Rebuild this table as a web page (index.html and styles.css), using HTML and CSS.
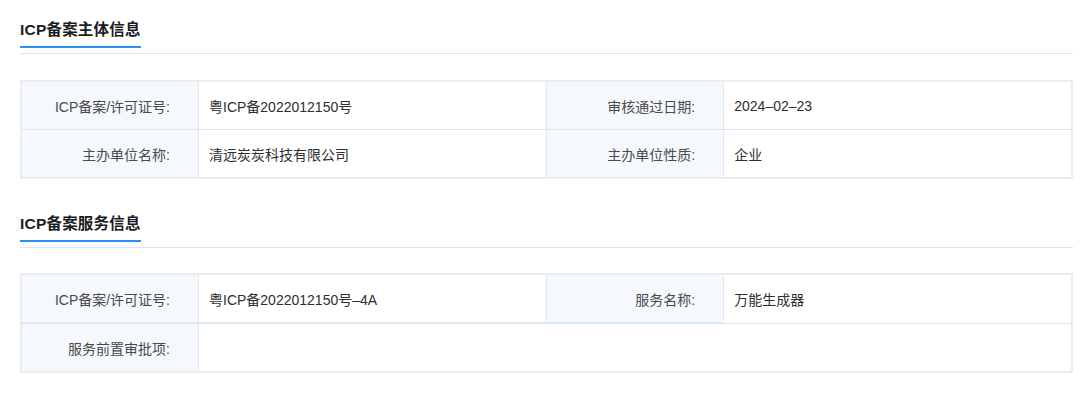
FILE: index.html
```html
<!DOCTYPE html>
<html lang="zh-CN">
<head>
<meta charset="utf-8">
<link rel="stylesheet" href="styles.css">
</head>
<body>
<div class="page">
  <section class="section">
    <div class="head"><h2 class="title">ICP备案主体信息</h2></div>
    <table class="info">
      <tr>
        <th>ICP备案/许可证号:</th><td class="v1">粤ICP备2022012150号</td>
        <th>审核通过日期:</th><td>2024–02–23</td>
      </tr>
      <tr>
        <th>主办单位名称:</th><td class="v1">清远炭炭科技有限公司</td>
        <th>主办单位性质:</th><td>企业</td>
      </tr>
    </table>
  </section>
  <section class="section second">
    <div class="head"><h2 class="title">ICP备案服务信息</h2></div>
    <table class="info">
      <tr class="split">
        <th>ICP备案/许可证号:</th><td class="v1">粤ICP备2022012150号–4A</td>
        <th>服务名称:</th><td class="grey">万能生成器</td>
      </tr>
      <tr>
        <th>服务前置审批项:</th><td colspan="3"></td>
      </tr>
    </table>
  </section>
</div>
</body>
</html>
```

FILE: styles.css
```css
html, body {
  margin: 0;
  padding: 0;
  background: #ffffff;
}
body {
  font-family: "Liberation Sans", "Noto Sans CJK SC", sans-serif;
  color: #333333;
}
.page {
  padding: 0 7px 0 20px;
}
.section {
  padding-top: 17px;
}
.second {
  margin-top: 15px;
}
.head {
  height: 36px;
  border-bottom: 1px solid #d3e6f5;
}
.title {
  display: inline-block;
  margin: 0;
  font-family: "Liberation Sans", "Noto Sans CJK SC", sans-serif;
  font-size: 15.5px;
  font-weight: 700;
  color: #1c1c1c;
  line-height: 26px;
  padding-bottom: 3px;
  border-bottom: 2px solid #2b8ef5;
  letter-spacing: 0.2px;
}
.info {
  margin-top: 26px;
  width: 100%;
  border-collapse: collapse;
  table-layout: fixed;
  border: 2px solid #ececec;
  font-size: 14px;
}
.second .info {
  margin-top: 25px;
}
.info th,
.info td {
  height: 47px;
  padding: 0;
  border-bottom: 1px solid #dae5ef;
}
.info th {
  width: 148px;
  padding-right: 28px;
  text-align: right;
  font-weight: 400;
  color: #4a4a4a;
  background: #f5f9fd;
  border-right: 1px solid #e2e8ee;
}
.info td {
  padding-left: 10px;
  color: #2e2e2e;
  border-right: 1px solid #e2e8ee;
}
.info .split th,
.info .split .v1 {
  border-bottom: 2px solid #dde9f5;
}
.info .split .grey {
  border-bottom: 1px solid #e4e4e4;
}
.info tr:last-child th,
.info tr:last-child td {
  border-bottom: 0;
}
```
